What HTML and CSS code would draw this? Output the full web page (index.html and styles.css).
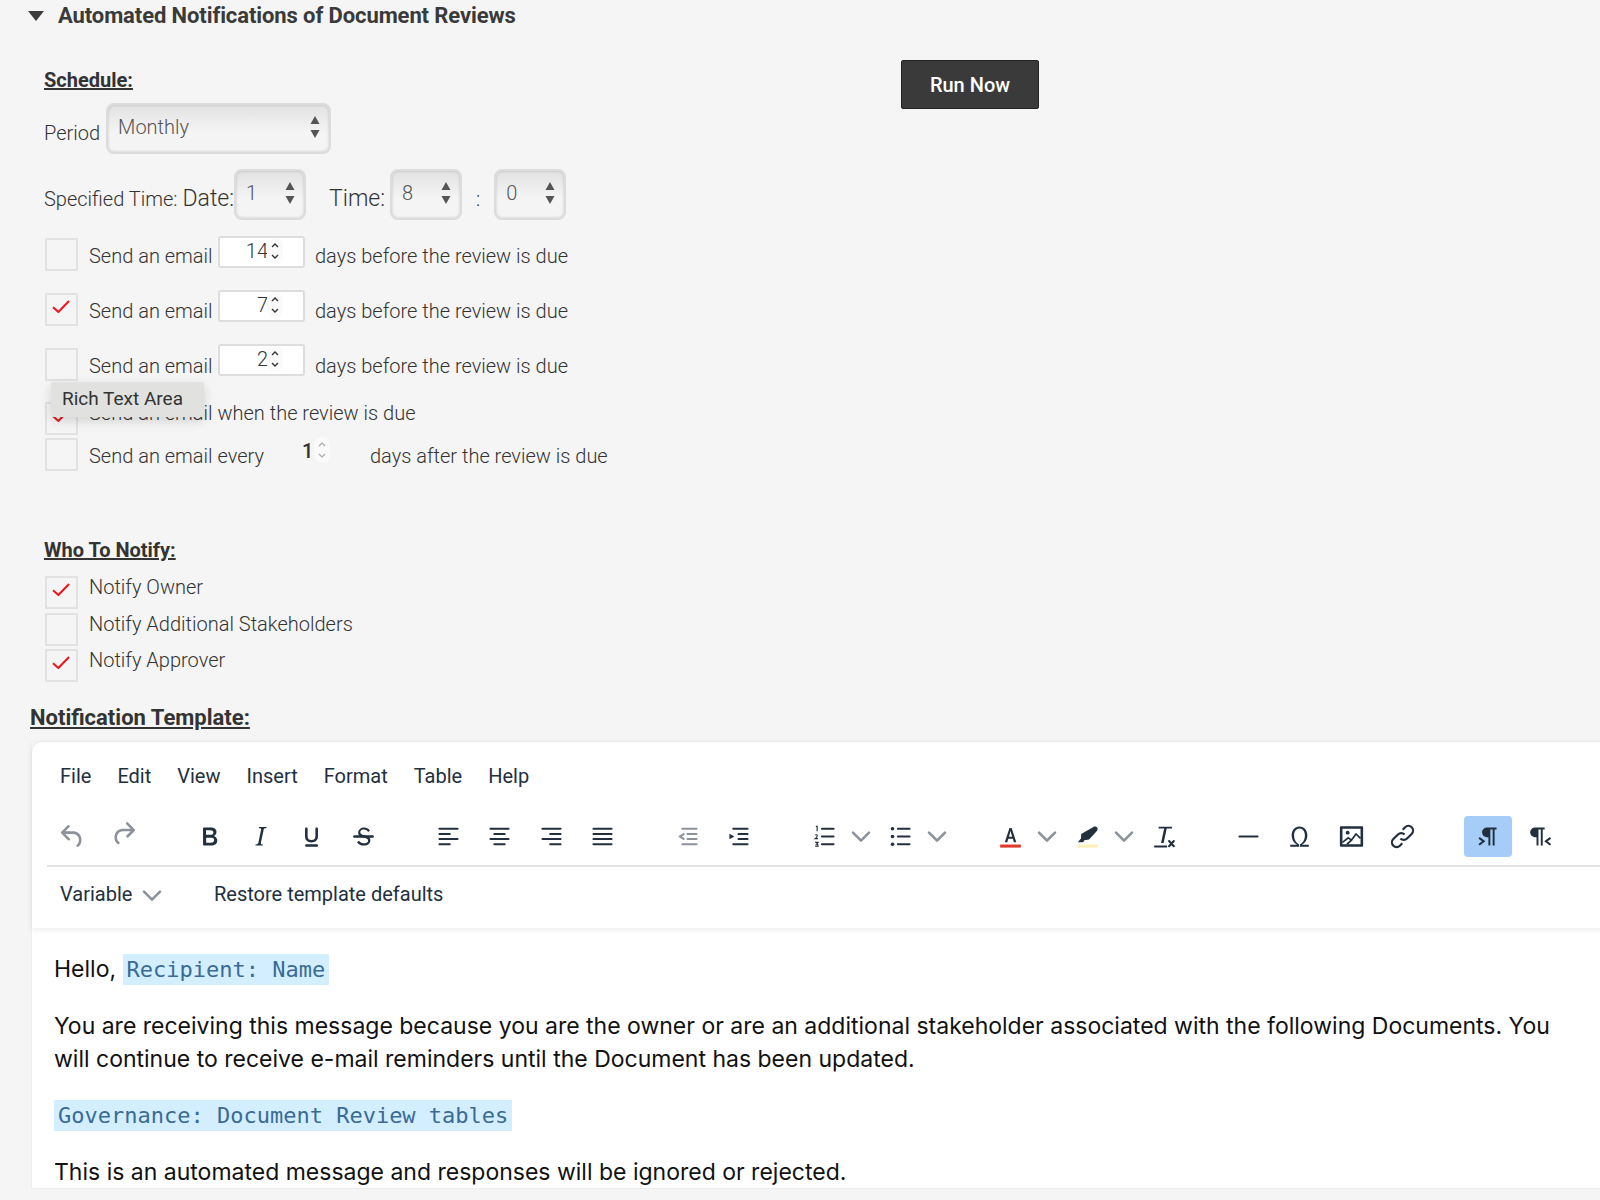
FILE: index.html
```html
<!DOCTYPE html>
<html lang="en">
<head>
<meta charset="utf-8">
<title>Automated Notifications of Document Reviews</title>
<link rel="stylesheet" href="styles.css">
</head>
<body>
<svg class="defs" width="0" height="0" aria-hidden="true">
  <symbol id="chev" viewBox="0 0 10 10"><path d="M1 2.8 5 6.8 9 2.8" fill="none" stroke="currentColor" stroke-width="1.3" stroke-linecap="round" stroke-linejoin="round"/></symbol>
  <symbol id="check" viewBox="0 0 18 13"><path d="M1 7.2 6.4 12 17 1" fill="none" stroke="#f0141e" stroke-width="2"/></symbol>
  <symbol id="arrows" viewBox="0 0 10 24"><path d="M5 1 9.5 9H.5ZM5 23 .5 15h9Z" fill="#555"/></symbol>
</svg>
<main class="page">
  <header class="section-title">
    <svg class="caret" viewBox="0 0 16 10"><path d="M0 0H16L8 10Z" fill="#3c3c3c"/></svg>
    <h1>Automated Notifications of Document Reviews</h1>
  </header>

  <div class="settings">
    <form class="settings-form">
      <h2 class="subhead schedule-head">Schedule:</h2>
      <div class="line period-line">
        <span class="label">Period</span>
        <div class="select select-wide"><span>Monthly</span><svg class="arrows"><use href="#arrows"/></svg></div>
      </div>
      <div class="line time-line">
        <span class="label">Specified Time:</span>
        <span class="label label-big date-label">Date:</span>
        <div class="select select-small"><span>1</span><svg class="arrows"><use href="#arrows"/></svg></div>
        <span class="label label-big time-label">Time:</span>
        <div class="select select-small"><span>8</span><svg class="arrows"><use href="#arrows"/></svg></div>
        <span class="label colon">:</span>
        <div class="select select-small"><span>0</span><svg class="arrows"><use href="#arrows"/></svg></div>
      </div>

      <div class="email-row row-a">
        <span class="box"></span><span class="text send">Send an email</span>
        <div class="num"><span>14</span><span class="spin"><svg viewBox="0 0 10 22"><path d="M2 7 5 4 8 7M2 15 5 18 8 15" fill="none" stroke="#333" stroke-width="1.4"/></svg></span></div>
        <span class="text after">days before the review is due</span>
      </div>
      <div class="email-row row-b">
        <span class="box"><svg class="check"><use href="#check"/></svg></span><span class="text send">Send an email</span>
        <div class="num"><span>7</span><span class="spin"><svg viewBox="0 0 10 22"><path d="M2 7 5 4 8 7M2 15 5 18 8 15" fill="none" stroke="#333" stroke-width="1.4"/></svg></span></div>
        <span class="text after">days before the review is due</span>
      </div>
      <div class="email-row row-c">
        <span class="box"></span><span class="text send">Send an email</span>
        <div class="num"><span>2</span><span class="spin"><svg viewBox="0 0 10 22"><path d="M2 7 5 4 8 7M2 15 5 18 8 15" fill="none" stroke="#333" stroke-width="1.4"/></svg></span></div>
        <span class="text after">days before the review is due</span>
      </div>
      <div class="email-row row-d">
        <span class="box"><svg class="check"><use href="#check"/></svg></span><span class="text">Send an email when the review is due</span>
        <div class="tooltip">Rich Text Area</div>
      </div>
      <div class="email-row row-e">
        <span class="box"></span><span class="text every">Send an email every</span>
        <div class="plain-num"><span>1</span><span class="spin spin-off"><svg viewBox="0 0 10 22"><path d="M2 7 5 4 8 7M2 15 5 18 8 15" fill="none" stroke="#aaa" stroke-width="1.2"/></svg></span></div>
        <span class="text after-every">days after the review is due</span>
      </div>

      <h2 class="subhead notify-head">Who To Notify:</h2>
      <div class="notify-row"><span class="box"><svg class="check"><use href="#check"/></svg></span><span class="text">Notify Owner</span></div>
      <div class="notify-row"><span class="box"></span><span class="text">Notify Additional Stakeholders</span></div>
      <div class="notify-row"><span class="box"><svg class="check"><use href="#check"/></svg></span><span class="text">Notify Approver</span></div>
    </form>
    <button class="run-now" type="button">Run Now</button>
  </div>

  <h2 class="template-head">Notification Template:</h2>

  <section class="editor">
    <div class="editor-header">
      <nav class="menubar">
        <span>File</span><span>Edit</span><span>View</span><span>Insert</span><span>Format</span><span>Table</span><span>Help</span>
      </nav>
      <div class="toolbar">
        <div class="group">
          <span class="btn off"><svg viewBox="0 0 24 24"><path d="M6.4 8H12c3.7 0 6.2 2 6.8 5.1.6 2.7-.4 5.6-2.3 6.8a1 1 0 0 1-1-1.8c1.1-.6 1.8-2.7 1.4-4.6-.5-2.1-2.1-3.5-4.9-3.5H6.4l3.3 3.3a1 1 0 1 1-1.4 1.4l-5-5a1 1 0 0 1 0-1.4l5-5a1 1 0 0 1 1.4 1.4L6.4 8Z"/></svg></span>
          <span class="btn off"><svg viewBox="0 0 24 24"><path d="M17.6 10H12c-2.8 0-4.4 1.4-4.9 3.5-.4 2 .3 4 1.4 4.6a1 1 0 1 1-1 1.8c-2-1.2-2.9-4.1-2.3-6.8.6-3 3-5.1 6.8-5.1h5.6l-3.3-3.3a1 1 0 1 1 1.4-1.4l5 5a1 1 0 0 1 0 1.4l-5 5a1 1 0 0 1-1.4-1.4l3.3-3.3Z" transform="translate(0 -2)"/></svg></span>
        </div>
        <div class="group">
          <span class="btn"><svg viewBox="0 0 24 24"><path d="M7.8 19c-.3 0-.5 0-.6-.2l-.2-.5V5.7c0-.2 0-.4.2-.5l.6-.2h5c1.5 0 2.7.3 3.5 1 .7.6 1.1 1.4 1.1 2.5a3 3 0 0 1-.6 1.9c-.4.6-1 1-1.6 1.2.4.1.9.3 1.3.6s.8.7 1 1.2c.4.4.5 1 .5 1.6 0 1.3-.4 2.3-1.3 3-.8.7-2.1 1-3.8 1H7.8Zm5-8.3c.6 0 1.2-.1 1.6-.5.4-.3.6-.7.6-1.3 0-1.1-.8-1.7-2.3-1.7H9.3v3.5h3.4Zm.5 6c.7 0 1.3-.1 1.7-.4.4-.4.6-.9.6-1.5s-.2-1-.7-1.4c-.4-.3-1-.4-2-.4H9.4v3.8h4Z"/></svg></span>
          <span class="btn"><svg viewBox="0 0 24 24"><path d="m16.7 4.7-.1.9h-.3c-.6 0-1 0-1.4.3-.3.3-.4.6-.5 1.1l-2.1 9.8v.6c0 .5.4.8 1.4.8h.2l-.2.8H8l.2-.8h.2c1.1 0 1.8-.5 2-1.5l2-9.8.1-.5c0-.6-.4-.8-1.4-.8h-.3l.2-.9h5.8Z"/></svg></span>
          <span class="btn"><svg viewBox="0 0 24 24"><path d="M16 5c.6 0 1 .4 1 1v6c0 2.8-2 4.6-5 4.6S7 14.800 7 12V6c0-.6.4-1 1-1s1 .4 1 1v6c0 1.700 1.100 2.800 3 2.800s3-1.100 3-2.800V6c0-.6.4-1 1-1ZM8 18h8c.6 0 1 .4 1 1s-.4 1-1 1H8a1 1 0 1 1 0-2Z"/></svg></span>
          <span class="btn"><svg viewBox="0 0 24 24"><path d="M15.600 8.500c-.5-.7-1-1.100-1.300-1.300-.6-.4-1.300-.6-2-.6-2.700 0-2.800 1.700-2.800 2.100 0 1.600 1.800 2 3.200 2.300 4.400.9 4.600 2.800 4.600 3.900 0 1.400-.7 4.100-5 4.100A6.200 6.200 0 0 1 7 16.400l1.500-1.100c.4.6 1.600 2 3.700 2 1.600 0 2.500-.4 3-1 .3-.4.3-.8.3-1.100 0-.8-.2-1.600-3-2.200-3-.7-4.600-1.400-4.600-3.900C7.900 6.500 10.200 5 12.300 5c1 0 2 .3 3 .9.6.3 1.200.9 1.700 1.500l-1.400 1.100Z"/><path d="M5 11h14a1 1 0 0 1 0 2H5a1 1 0 0 1 0-2Z"/></svg></span>
        </div>
        <div class="group">
          <span class="btn"><svg viewBox="0 0 24 24" class="lines"><path d="M5 6h14M5 10h8M5 14h14M5 18h8"/></svg></span>
          <span class="btn"><svg viewBox="0 0 24 24" class="lines"><path d="M5 6h14M8 10h8M5 14h14M8 18h8"/></svg></span>
          <span class="btn"><svg viewBox="0 0 24 24" class="lines"><path d="M5 6h14M11 10h8M5 14h14M11 18h8"/></svg></span>
          <span class="btn"><svg viewBox="0 0 24 24" class="lines"><path d="M5 6h14M5 10h14M5 14h14M5 18h14"/></svg></span>
        </div>
        <div class="group">
          <span class="btn off"><svg viewBox="0 0 24 24"><path class="ln" d="M8 6h11M12 10h7M12 14h7M8 18h11"/><path class="ln" d="M9 10.200 6.200 12 9 13.800" stroke-width="1.600"/></svg></span>
          <span class="btn"><svg viewBox="0 0 24 24"><path class="ln" d="M8 6h11M12 10h7M12 14h7M8 18h11"/><path d="M5 9.800 8.800 12 5 14.200Z"/></svg></span>
        </div>
        <div class="group">
          <span class="split"><span class="btn"><svg viewBox="0 0 24 24"><path class="ln" d="M10 6h9M10 12h9M10 18h9"/><path class="thin" d="M5.300 4.300 6.300 4V8M4.800 10.800C6.800 10 7 12 4.800 13.700H7M4.800 16.500H7L5.800 18H6.700L7 19.500H4.800"/></svg></span><svg class="chev"><use href="#chev"/></svg></span>
          <span class="split"><span class="btn"><svg viewBox="0 0 24 24"><path class="ln" d="M10 6h9M10 12h9M10 18h9"/><circle cx="5.800" cy="6" r="1.400"/><circle cx="5.800" cy="12" r="1.400"/><circle cx="5.800" cy="18" r="1.400"/></svg></span><svg class="chev"><use href="#chev"/></svg></span>
        </div>
        <div class="group">
          <span class="split"><span class="btn"><svg viewBox="0 0 24 24"><path d="M7.600 16.500 11.200 5.500h1.700l3.600 11h-1.900l-.8-2.800H10.300l-.8 2.800H7.600Zm3.200-4.400h2.500L12 7.700l-1.200 4.400Z"/><path fill="#e03a2a" d="M4 18.200h16v2.400H4z"/></svg></span><svg class="chev"><use href="#chev"/></svg></span>
          <span class="split"><span class="btn"><svg viewBox="0 0 24 24"><path d="M16.600 4.600c.9-.6 2.200-.4 2.900.5.600.9.400 2.100-.4 2.800l-5.900 6.500-3.600.5-1 1.600H4.600l2.400-3.200.1-3.200 9.500-5.500Z"/><path fill="#fff0b8" d="M4 18.200h16v2.400H4z"/></svg></span><svg class="chev"><use href="#chev"/></svg></span>
          <span class="btn"><svg viewBox="0 0 24 24"><path d="M8.200 4.500h10.300v1.300h-4l-2.400 11.200h-2L12.500 5.800H8.200ZM4.800 19h10v1.500h-10Z"/><path class="ln" d="M16.300 15.500 20 19.500M20 15.500 16.300 19.500" stroke-width="1.700" stroke-linecap="butt"/></svg></span>
        </div>
        <div class="group">
          <span class="btn"><svg viewBox="0 0 24 24" class="lines"><path d="M5 12h14"/></svg></span>
          <span class="btn"><svg viewBox="0 0 24 24"><path fill-rule="evenodd" d="M13.900 18.400h5.300V20h-6.900v-1.800c2.400-1.200 3.900-3.800 3.900-7 0-3-1.600-5.300-4.200-5.300S7.800 8.200 7.800 11.200c0 3.200 1.500 5.800 3.900 7V20H4.800v-1.600h5.300c-2.600-1.400-4.200-4-4.200-7.100C5.900 7.300 8.400 4.300 12 4.300s6.100 3 6.100 7c0 3.100-1.600 5.700-4.200 7.100Z"/></svg></span>
          <span class="btn"><svg viewBox="0 0 24 24"><path fill-rule="evenodd" d="M4 4h16c.6 0 1 .4 1 1v14c0 .6-.4 1-1 1H4a1 1 0 0 1-1-1V5c0-.6.4-1 1-1Zm1 2v12h14V6H5Z"/><circle cx="9" cy="9" r="1.500"/><path fill="none" stroke="#222f3e" stroke-width="1.300" d="M5 16.500 9.500 13l2.500 1.800L15.500 10l3.500 3.500M8.500 18l4-3.500"/></svg></span>
          <span class="btn"><svg viewBox="0 0 24 24"><path fill="none" stroke="#222f3e" stroke-width="1.700" d="M10.400 13.600a3.600 3.600 0 0 0 5.100 0l3.600-3.600a3.600 3.600 0 0 0-5.100-5.100l-1.800 1.800M13.600 10.400a3.600 3.600 0 0 0-5.100 0l-3.600 3.600a3.600 3.600 0 0 0 5.100 5.100l1.800-1.800"/></svg></span>
        </div>
        <div class="group">
          <span class="btn active"><svg viewBox="0 0 24 24"><path d="M11.500 5H19v1.600h-1.500V19H16V6.600h-1.800V19h-1.500v-6.500h-1.200a3.750 3.750 0 0 1 0-7.500Z"/><path class="ln" d="M6 13.500 9 15.700 6 18" stroke-width="1.700" stroke-linecap="butt" stroke-linejoin="miter"/></svg></span>
          <span class="btn"><svg viewBox="0 0 24 24"><path d="M8.500 5H16v1.600h-1.500V19H13V6.600h-1.800V19H9.700v-6.500H8.500a3.750 3.750 0 0 1 0-7.500Z"/><path class="ln" d="M20 13.500 17 15.700 20 18" stroke-width="1.700" stroke-linecap="butt" stroke-linejoin="miter"/></svg></span>
        </div>
      </div>
      <div class="toolbar-two">
        <span class="variable">Variable <svg class="chev chev-small"><use href="#chev"/></svg></span>
        <span class="restore">Restore template defaults</span>
      </div>
    </div>
    <div class="editor-body">
      <p>Hello, <span class="token">Recipient: Name</span></p>
      <p>You are receiving this message because you are the owner or are an additional stakeholder associated with the following Documents. You will continue to receive e-mail reminders until the Document has been updated.</p>
      <p><span class="token">Governance: Document Review tables</span></p>
      <p>This is an automated message and responses will be ignored or rejected.</p>
    </div>
  </section>
</main>
</body>
</html>
```
FILE: styles.css
```css
html, body { margin: 0; height: 1200px; overflow: hidden; }
body { background: #f5f5f5; color: #333; font-family: Roboto, "Open Sans", sans-serif; font-weight: 300; }
.defs { position: absolute; }
.page { width: 1600px; height: 1200px; overflow: hidden; }

.section-title { display: flex; align-items: center; height: 31px; padding-left: 28px; }
.caret { width: 16px; height: 10px; margin-right: 14px; }
.section-title h1 { margin: 0; font-size: 22px; font-weight: 700; color: #3a3a3a; line-height: 31px; letter-spacing: -.1px; }

.settings { display: flex; align-items: flex-start; padding-left: 44px; }
.settings-form { width: 857px; margin: 0; flex: none; }
.run-now { margin-top: 29px; width: 138px; height: 49px; background: #3a3a3a; border: 1px solid #222; border-radius: 2px; color: #fff; font: 500 20px/1 Roboto, sans-serif; }

.subhead { margin: 0; font-size: 20px; font-weight: 700; line-height: 30px; text-decoration: underline; color: #333; }
.schedule-head { margin-top: 34px; }
.notify-head { margin-top: 64px; }

.line { display: flex; align-items: flex-start; height: 51px; }
.period-line { margin-top: 8px; }
.time-line { margin-top: 15px; }
.label { font-size: 20px; line-height: 30px; margin-top: 15px; white-space: nowrap; }
.label-big { font-size: 23px; margin-top: 15px; }
.date-label { margin-left: 5px; }
.time-label { margin-left: 23px; margin-right: 5px; }
.colon { margin-left: 14px; margin-right: 14px; }
.period-line .label { margin-right: 6px; }

.select { display: flex; align-items: center; justify-content: space-between; box-sizing: border-box; height: 51px; border: 2px solid #dcdcdc; border-radius: 8px; background: linear-gradient(#e2e2e2, #f5f5f5 60%, #f4f4f4); box-shadow: inset 0 0 3px rgba(0,0,0,.18); color: #555; font-size: 20px; padding: 0 9px 4px 10px; }
.select-wide { width: 225px; }
.select-small { width: 72px; }
.arrows { width: 10px; height: 24px; }

.box { display: block; flex: none; box-sizing: border-box; width: 33px; height: 33px; border: 2px solid #e2e2e2; background: #f5f5f5; position: relative; }
.check { position: absolute; left: 5px; top: 5px; width: 18px; height: 13px; }
.text { font-size: 20px; line-height: 30px; white-space: nowrap; }

.email-row { display: flex; align-items: flex-start; position: relative; }
.email-row .box { margin-left: 1px; }
.email-row .text { margin-left: 11px; }
.send { width: 120px; }
.email-row .after { margin-left: 10px; }
.email-row .every { width: 213px; }
.email-row .after-every { margin-left: 30px; }

.row-a { margin-top: 16px; height: 35px; }
.row-a .box { margin-top: 2px; }
.row-a .text { margin-top: 5px; }
.row-b { margin-top: 19px; height: 36px; }
.row-b .box { margin-top: 3px; }
.row-b .text { margin-top: 6px; }
.row-c { margin-top: 18px; height: 37px; }
.row-c .box { margin-top: 4px; }
.row-c .text { margin-top: 7px; }
.row-d { margin-top: 21px; height: 33px; }
.row-d .text { margin-top: -4px; }
.row-e { margin-top: 3px; height: 33px; }
.row-e .text { margin-top: 3px; }

.num { display: flex; box-sizing: border-box; justify-content: flex-end; align-items: flex-start; width: 87px; height: 32px; margin-left: 9px; padding: 0 21px 0 0; border: 2px solid #ddd; border-radius: 3px; background: #fff; font-size: 20px; line-height: 26px; position: relative; }
.spin { position: absolute; right: 20px; top: 0; width: 16px; height: 26px; background: #fafafa; border-radius: 8px; }
.spin svg { display: block; width: 10px; height: 22px; margin: 2px auto; }
.num > span:first-child { margin-right: 14px; }
.plain-num { display: flex; width: 38px; height: 26px; position: relative; font-weight: 500; font-size: 20px; line-height: 26px; justify-content: flex-start; margin-top: 0; }
.spin-off { left: 12px; right: auto; top: -1px; }

.tooltip { position: absolute; left: 7px; top: -20px; width: 153px; height: 35px; box-sizing: border-box; padding-left: 11px; background: #e1e1df; border-radius: 2px; box-shadow: 0 4px 12px rgba(0,0,0,.14); color: #333; font-size: 19px; line-height: 34px; font-weight: 400; white-space: nowrap; }

.notify-row { display: flex; align-items: flex-start; height: 33px; margin-top: 3.5px; }
.notify-head + .notify-row { margin-top: 11px; }
.notify-row .box { margin-left: 1px; }
.notify-row .text { margin: -4px 0 0 11px; }

.template-head { margin: 21px 0 0 30px; font-size: 22px; font-weight: 700; line-height: 30px; text-decoration: underline; color: #333; }

.editor { width: 1620px; margin: 9px 0 0 32px; background: #fff; border-radius: 10px 0 0 0; box-shadow: 0 0 3px rgba(0,0,0,.08); }
.editor-header { box-shadow: 0 2px 6px rgba(0,0,0,.08); position: relative; }
.menubar { display: flex; gap: 26px; height: 68px; padding-left: 28px; align-items: center; color: #222f3e; font-size: 20px; font-weight: 400; }
.toolbar { display: flex; gap: 34px; height: 55px; margin-left: 15px; border-bottom: 2px solid #e4e4e4; box-sizing: content-box; }
.group { display: flex; align-items: flex-start; }
.btn { display: flex; align-items: center; justify-content: center; width: 47.3px; height: 41px; margin: 6px 2px 0; border-radius: 4px; }
.btn svg { width: 31px; height: 31px; fill: #222f3e; }
.btn.off svg { fill: #8b929b; --ln: #8b929b; }
.btn.active { background: #a6cdf8; }
.lines { fill: none !important; stroke: #222f3e; stroke-width: 1.6; stroke-linecap: round; }
.ln { fill: none; stroke: var(--ln, #222f3e); stroke-width: 1.600; stroke-linecap: round; }
.thin { fill: none; stroke: #222f3e; stroke-width: .9; }
.split { display: flex; align-items: flex-start; margin-right: 0; }
.split .btn { margin-right: 0; }
.chev { width: 20px; height: 20px; margin: 17px 4px 0 3px; color: #8b929b; flex: none; }
.toolbar-two { display: flex; align-items: center; height: 61px; padding: 0 0 8px 28px; box-sizing: border-box; color: #222f3e; font-size: 20px; font-weight: 400; }
.variable { display: flex; align-items: center; width: 154px; white-space: pre; }
.chev-small { margin: 4px 0 0 5px; }

.editor-body { padding: 25px 62px 0 22px; color: #111; font-family: Inter, sans-serif; font-weight: 400; font-size: 23px; line-height: 32.6px; }
.editor-body p { margin: 0 0 23.500px; }
.token { background: #d3efff; color: #3a6a96; font-family: "DejaVu Sans Mono", monospace; font-size: 22px; padding: 3px 4px; }
```
